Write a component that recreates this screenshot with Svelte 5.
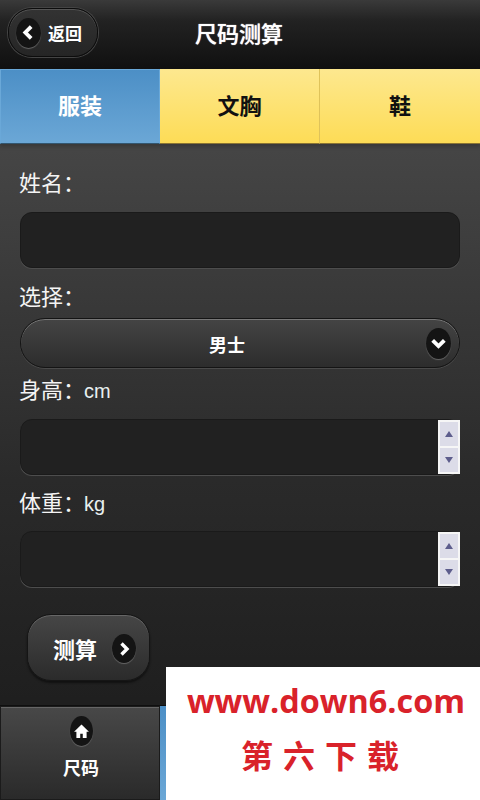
<script lang="ts">
  const tabs = [
    { label: "服装", active: true },
    { label: "文胸", active: false },
    { label: "鞋", active: false },
  ];
</script>

<div class="page">
  <header class="top">
    <button class="back">
      <span class="dot">
        <svg viewBox="0 0 16 16" width="17" height="17"><path d="M10.5 2.5 5 8l5.5 5.5" fill="none" stroke="#fff" stroke-width="3.6" /></svg>
      </span>
      <span class="back-text">返回</span>
    </button>
    <h1>尺码测算</h1>
  </header>

  <nav class="tabs">
    {#each tabs as tab}
      <div class="tab" class:active={tab.active}>{tab.label}</div>
    {/each}
  </nav>

  <main class="form">
    <div class="label first">姓名：</div>
    <div class="input"></div>

    <div class="label pick">选择：</div>
    <div class="select">
      <span class="select-text">男士</span>
      <span class="dot select-dot">
        <svg viewBox="0 0 16 16" width="17" height="17"><path d="M2.5 5 8 10.5 13.5 5" fill="none" stroke="#fff" stroke-width="3.6" /></svg>
      </span>
    </div>

    <div class="label height">身高：<span class="unit">cm</span></div>
    <div class="number">
      <div class="input"></div>
      <div class="spin">
        <span><i class="up"></i></span>
        <span><i class="down"></i></span>
      </div>
    </div>

    <div class="label weight">体重：<span class="unit">kg</span></div>
    <div class="number">
      <div class="input"></div>
      <div class="spin">
        <span><i class="up"></i></span>
        <span><i class="down"></i></span>
      </div>
    </div>

    <button class="calc">
      <span>测算</span>
      <span class="dot calc-dot">
        <svg viewBox="0 0 16 16" width="16" height="16"><path d="M5.5 2.5 11 8l-5.5 5.5" fill="none" stroke="#fff" stroke-width="3.4" /></svg>
      </span>
    </button>
  </main>

  <footer class="bottom">
    <div class="foot-item">
      <span class="dot home-dot">
        <svg viewBox="0 0 16 16" width="17" height="17"><path d="M8 1.5 1 8.2h2.2V14h3.6v-3.8h2.4V14h3.6V8.2H15z" fill="#fff" /></svg>
      </span>
      <span class="foot-text">尺码</span>
    </div>
    <div class="foot-active"></div>
  </footer>

  <aside class="mark">
    <div class="mark-url">www.down6.com</div>
    <div class="mark-name">第六下载</div>
  </aside>
</div>

<style>
  :global(body) {
    margin: 0;
    background: #222;
  }

  .page {
    position: relative;
    width: 480px;
    height: 800px;
    overflow: hidden;
    display: flex;
    flex-direction: column;
    font-family: "Noto Sans CJK SC", "Liberation Sans", sans-serif;
    color: #fff;
    background: linear-gradient(#454545 150px, #2a2a2a 480px, #1f1f1f 700px);
  }

  button {
    font-family: inherit;
    color: #fff;
    padding: 0;
  }

  .top {
    height: 69px;
    flex-shrink: 0;
    display: flex;
    align-items: center;
    position: relative;
    background: linear-gradient(#3a3a3a, #222 30%, #101010);
  }

  .back {
    margin: 0 0 4px 8px;
    width: 90px;
    height: 49px;
    box-sizing: border-box;
    display: flex;
    align-items: center;
    gap: 7px;
    padding-left: 7px;
    border-radius: 24px;
    border: 1px solid #0c0c0c;
    background: linear-gradient(#333, #252525);
    box-shadow: 0 0 0 1px #444, inset 0 1px 0 #555;
  }

  .dot {
    display: flex;
    align-items: center;
    justify-content: center;
    border-radius: 50%;
    background: #141414;
    box-shadow: 0 1px 1px #666;
    flex-shrink: 0;
  }
  .back .dot {
    width: 25px;
    height: 30px;
  }

  .back-text {
    font-size: 17px;
    font-weight: 700;
  }

  h1 {
    position: absolute;
    left: 195px;
    top: 13px;
    margin: 0;
    font-size: 22px;
    line-height: 38px;
    font-weight: 500;
    text-shadow: 0 0 1px #fff;
  }

  .tabs {
    height: 75px;
    flex-shrink: 0;
    display: grid;
    grid-template-columns: 160px 160px 160px;
    box-shadow: 0 3px 3px #3a3a3a;
  }

  .tab {
    display: flex;
    align-items: center;
    justify-content: center;
    padding-bottom: 5px;
    box-sizing: border-box;
    font-size: 22px;
    font-weight: 700;
    color: #111;
    background: linear-gradient(#fde88f, #fddc56);
    border-right: 1px solid #dfc35a;
    border-bottom: 1px solid #8a7434;
  }
  .tab.active {
    color: #fff;
    background: linear-gradient(#4c8fc6, #6ba7d6);
    border: 1px solid #6aa8d8;
    border-bottom-color: #33566f;
  }
  .tab:last-child {
    border-right: none;
  }

  .form {
    flex: 1;
    padding: 0 20px;
    min-height: 0;
  }

  .label {
    font-size: 22px;
    line-height: 30px;
    margin-left: -1px;
    color: #f4f4f4;
  }
  .label.first {
    margin-top: 22px;
    margin-bottom: 16px;
  }
  .label.pick {
    margin-top: 12px;
    margin-bottom: 8px;
  }
  .label.height {
    margin-top: 5px;
    margin-bottom: 13px;
  }
  .label.weight {
    margin-top: 11px;
    margin-bottom: 12px;
  }

  .unit {
    font-family: "Liberation Sans", sans-serif;
    font-size: 20px;
    margin-left: -1px;
    color: #e8f0f0;
  }

  .input {
    width: 440px;
    height: 56px;
    box-sizing: border-box;
    border-radius: 12px;
    background: #212121;
    border: 1px solid #1a1a1a;
    box-shadow: 0 1px 0 #4d4d4d;
  }

  .select {
    width: 440px;
    height: 50px;
    box-sizing: border-box;
    position: relative;
    display: flex;
    align-items: center;
    justify-content: center;
    border-radius: 25px;
    border: 1px solid #141414;
    background: linear-gradient(#444, #2c2c2c);
    box-shadow: inset 0 1px 0 #777, 0 1px 0 #4a4a4a;
  }
  .select-text {
    font-size: 18px;
    font-weight: 700;
    margin: 2px 26px 0 0;
  }
  .select-dot {
    position: absolute;
    right: 8px;
    top: 9px;
    width: 25px;
    height: 31px;
  }

  .number {
    position: relative;
  }

  .spin {
    position: absolute;
    left: 418px;
    top: 1px;
    width: 22px;
    height: 54px;
    box-sizing: border-box;
    padding: 2px;
    background: #f6f6f6;
    display: flex;
    flex-direction: column;
    gap: 2px;
  }
  .spin span {
    flex: 1;
    display: flex;
    align-items: center;
    justify-content: center;
    background: #dcdce8;
  }
  .spin i {
    width: 0;
    height: 0;
    border-left: 4px solid transparent;
    border-right: 4px solid transparent;
  }
  .spin .up {
    border-bottom: 6px solid #5d5d8c;
  }
  .spin .down {
    border-top: 6px solid #5d5d8c;
  }

  .calc {
    margin: 27px 0 0 7px;
    width: 123px;
    height: 67px;
    box-sizing: border-box;
    display: flex;
    align-items: center;
    gap: 15px;
    padding-left: 25px;
    font-size: 22px;
    font-weight: 700;
    border-radius: 24px;
    border: 1px solid #151515;
    background: linear-gradient(#464646, #2b2b2b);
    box-shadow: inset 0 1px 0 #666, 0 2px 2px #111;
  }
  .calc-dot {
    width: 24px;
    height: 29px;
    margin-top: 2px;
  }

  .bottom {
    height: 95px;
    flex-shrink: 0;
    display: flex;
    border-top: 1px solid #0f0f0f;
    box-sizing: border-box;
  }
  .foot-item {
    width: 160px;
    box-sizing: border-box;
    display: flex;
    flex-direction: column;
    align-items: center;
    padding: 9px 0 0 2px;
    gap: 8px;
    border: 1px solid #1b1b1b;
    background: linear-gradient(#484848, #2a2a2a);
    box-shadow: inset 0 1px 0 #666;
  }
  .home-dot {
    width: 23px;
    height: 30px;
  }
  .foot-text {
    font-size: 18px;
    line-height: 26px;
    font-weight: 700;
  }
  .foot-active {
    width: 10px;
    background: linear-gradient(#4c8fc6, #6ba7d6);
  }

  .mark {
    position: absolute;
    left: 166px;
    top: 667px;
    width: 314px;
    height: 133px;
    background: #fff;
    color: #d9222a;
    text-align: center;
    font-weight: 700;
  }
  .mark-url {
    margin: 13px 0 0 6px;
    font-family: "Open Sans", "Liberation Sans", sans-serif;
    font-size: 32.4px;
    line-height: 40px;
  }
  .mark-name {
    margin: 13px 0 0 4px;
    font-size: 32px;
    line-height: 42px;
    letter-spacing: 10px;
  }
</style>
